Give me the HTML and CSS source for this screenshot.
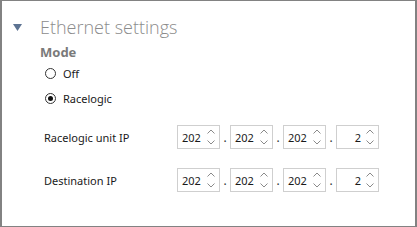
FILE: index.html
```html
<!DOCTYPE html>
<html lang="en">
<head>
    <meta charset="UTF-8">
    <title>Ethernet settings</title>
    <link rel="stylesheet" href="styles.css">
</head>
<body>
    <div class="panel">
        <div class="header">
            <svg class="toggle" width="9" height="7" viewBox="0 0 9 7"><polygon points="0,0 9,0 4.5,7" fill="#5d7392"/></svg>
            <span class="title">Ethernet settings</span>
        </div>

        <div class="section">
            <div class="label-mode">Mode</div>
            <label class="radio"><span class="dot"></span>Off</label>
            <label class="radio checked"><span class="dot"></span>Racelogic</label>
        </div>

        <div class="ip-row">
            <span class="ip-label">Racelogic unit IP</span>
            <div class="ip">
                <div class="spin"><span class="val">202</span><span class="arrows"><svg width="8" height="5" viewBox="0 0 8 5"><polyline points="0.5,4.5 4,1 7.5,4.5"/></svg><svg width="8" height="5" viewBox="0 0 8 5"><polyline points="0.5,0.5 4,4 7.5,0.5"/></svg></span></div>
                <span class="sep">.</span>
                <div class="spin"><span class="val">202</span><span class="arrows"><svg width="8" height="5" viewBox="0 0 8 5"><polyline points="0.5,4.5 4,1 7.5,4.5"/></svg><svg width="8" height="5" viewBox="0 0 8 5"><polyline points="0.5,0.5 4,4 7.5,0.5"/></svg></span></div>
                <span class="sep">.</span>
                <div class="spin"><span class="val">202</span><span class="arrows"><svg width="8" height="5" viewBox="0 0 8 5"><polyline points="0.5,4.5 4,1 7.5,4.5"/></svg><svg width="8" height="5" viewBox="0 0 8 5"><polyline points="0.5,0.5 4,4 7.5,0.5"/></svg></span></div>
                <span class="sep">.</span>
                <div class="spin"><span class="val right">2</span><span class="arrows"><svg width="8" height="5" viewBox="0 0 8 5"><polyline points="0.5,4.5 4,1 7.5,4.5"/></svg><svg width="8" height="5" viewBox="0 0 8 5"><polyline points="0.5,0.5 4,4 7.5,0.5"/></svg></span></div>
            </div>
        </div>

        <div class="ip-row">
            <span class="ip-label">Destination IP</span>
            <div class="ip">
                <div class="spin"><span class="val">202</span><span class="arrows"><svg width="8" height="5" viewBox="0 0 8 5"><polyline points="0.5,4.5 4,1 7.5,4.5"/></svg><svg width="8" height="5" viewBox="0 0 8 5"><polyline points="0.5,0.5 4,4 7.5,0.5"/></svg></span></div>
                <span class="sep">.</span>
                <div class="spin"><span class="val">202</span><span class="arrows"><svg width="8" height="5" viewBox="0 0 8 5"><polyline points="0.5,4.5 4,1 7.5,4.5"/></svg><svg width="8" height="5" viewBox="0 0 8 5"><polyline points="0.5,0.5 4,4 7.5,0.5"/></svg></span></div>
                <span class="sep">.</span>
                <div class="spin"><span class="val">202</span><span class="arrows"><svg width="8" height="5" viewBox="0 0 8 5"><polyline points="0.5,4.5 4,1 7.5,4.5"/></svg><svg width="8" height="5" viewBox="0 0 8 5"><polyline points="0.5,0.5 4,4 7.5,0.5"/></svg></span></div>
                <span class="sep">.</span>
                <div class="spin"><span class="val right">2</span><span class="arrows"><svg width="8" height="5" viewBox="0 0 8 5"><polyline points="0.5,4.5 4,1 7.5,4.5"/></svg><svg width="8" height="5" viewBox="0 0 8 5"><polyline points="0.5,0.5 4,4 7.5,0.5"/></svg></span></div>
            </div>
        </div>
    </div>
</body>
</html>
```

FILE: styles.css
```css
body {
    margin: 0;
    font-family: "Noto Sans", "Open Sans", sans-serif;
    background: #fff;
}

.panel {
    width: 417px;
    height: 227px;
    box-sizing: border-box;
    border: 1px solid #828282;
    border-left-width: 2px;
    border-right-width: 2px;
    padding: 13px 0 0 11px;
}

.header {
    display: flex;
    align-items: center;
    height: 26px;
}

.toggle {
    margin-right: 18px;
}

.title {
    font-family: "Open Sans", sans-serif;
    font-weight: 300;
    font-size: 18px;
    color: #8c8c8c;
}

.section {
    padding-left: 27px;
    margin-top: 4px;
}

.label-mode {
    font-size: 13px;
    font-weight: bold;
    color: #7a7a7a;
    line-height: 16px;
}

.radio {
    display: flex;
    align-items: center;
    font-size: 11px;
    color: #1a1a1a;
    height: 16px;
    margin-left: 5px;
    margin-top: 5px;
}

.radio + .radio {
    margin-top: 9px;
}

.dot {
    width: 9px;
    height: 9px;
    border: 1px solid #333;
    border-radius: 50%;
    margin-right: 7px;
    box-sizing: content-box;
    position: relative;
}

.radio.checked .dot::after {
    content: "";
    position: absolute;
    left: 2px;
    top: 2px;
    width: 5px;
    height: 5px;
    border-radius: 50%;
    background: #111;
}

.ip-row {
    display: flex;
    align-items: center;
    margin-top: 19px;
    padding-left: 31px;
}

.ip-row + .ip-row {
    margin-top: 19px;
}

.ip-label {
    width: 133px;
    font-size: 11px;
    color: #1a1a1a;
}

.ip {
    display: flex;
    align-items: center;
}

.spin {
    width: 43px;
    height: 24px;
    box-sizing: border-box;
    border: 1px solid #cfcfcf;
    display: flex;
    align-items: center;
    padding: 0 4px 0 4px;
}

.val {
    flex: 1;
    font-size: 11px;
    color: #1a1a1a;
}

.val.right {
    text-align: right;
    padding-right: 5px;
}

.arrows {
    display: flex;
    flex-direction: column;
    gap: 6px;
}

.arrows svg {
    display: block;
    fill: none;
    stroke: #8a8a8a;
    stroke-width: 1;
}

.sep {
    width: 10px;
    text-align: center;
    font-size: 12px;
    color: #333;
}
```
